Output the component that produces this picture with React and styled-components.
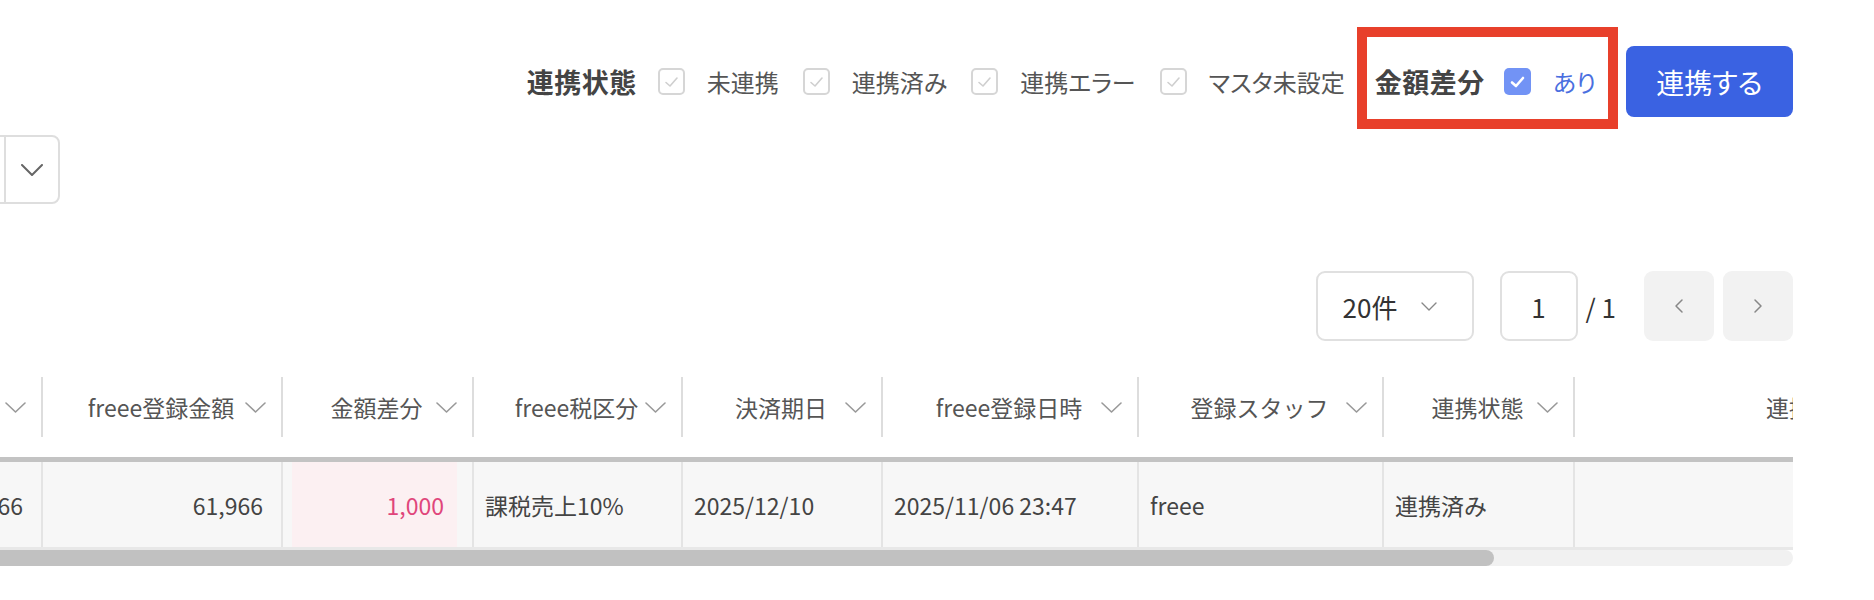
import React from "react";
import styled, { createGlobalStyle } from "styled-components";

const GlobalStyle = createGlobalStyle`
  html, body {
    margin: 0;
    background: #fff;
  }
  body {
    font-family: "Noto Sans CJK JP", "Noto Sans", sans-serif;
    color: #444;
    overflow: hidden;
  }
`;

const Page = styled.div`
  display: flex;
  flex-direction: column;
  padding: 46px 81px 0 0;
`;

/* ---------- toolbar ---------- */

const Toolbar = styled.div`
  display: flex;
  justify-content: flex-end;
  align-items: center;
  gap: 30px;
  height: 71px;
`;

const StatusGroup = styled.div`
  display: flex;
  align-items: center;
  gap: 24px;
`;

const GroupLabel = styled.span`
  font-size: 27px;
  font-weight: 700;
  letter-spacing: 0.5px;
  color: #444;
  margin-right: -3px;
`;

const Option = styled.label`
  display: flex;
  align-items: center;
  gap: 22px;
  font-size: 24px;
  color: ${(p) => (p.$active ? "#4a6fe0" : "#555")};
  font-feature-settings: "palt";
  white-space: nowrap;
`;

const Box = styled.span`
  width: 27px;
  height: 27px;
  box-sizing: border-box;
  border-radius: 5px;
  display: flex;
  align-items: center;
  justify-content: center;
  flex-shrink: 0;
  border: ${(p) => (p.$checked ? "none" : "2px solid #d6d6d6")};
  background: ${(p) => (p.$checked ? "#7293f5" : "#fff")};
`;

const DiffGroup = styled.div`
  position: relative;
  align-self: stretch;
  display: flex;
  align-items: center;
  gap: 22px;

  &::after {
    content: "";
    position: absolute;
    left: -18px;
    right: -22px;
    top: -19px;
    bottom: -12px;
    border: 10px solid #e8402b;
    pointer-events: none;
  }
`;

const SyncButton = styled.button`
  width: 167px;
  height: 71px;
  border: none;
  border-radius: 8px;
  background: #3a62e2;
  color: #fff;
  font-family: inherit;
  font-size: 28px;
  font-feature-settings: "palt";
`;

/* ---------- filter select (cut off at left) ---------- */

const FilterRow = styled.div`
  display: flex;
  margin-top: 18px;
`;

const CutSelect = styled.div`
  width: 200px;
  height: 69px;
  margin-left: -140px;
  box-sizing: border-box;
  border: 2px solid #dedede;
  border-radius: 8px;
  display: flex;
`;

const SelectValue = styled.div`
  flex: 1;
  border-right: 2px solid #dedede;
`;

const SelectToggle = styled.div`
  width: 52px;
  display: flex;
  align-items: center;
  justify-content: center;
`;

/* ---------- pagination ---------- */

const Pager = styled.div`
  display: flex;
  justify-content: flex-end;
  align-items: center;
  margin-top: 67px;
  font-size: 26px;
  color: #333;
`;

const PerPage = styled.div`
  width: 158px;
  height: 70px;
  box-sizing: border-box;
  border: 2px solid #e0e0e0;
  border-radius: 9px;
  display: flex;
  align-items: center;
  gap: 24px;
  padding-left: 25px;
  margin-right: 26px;
`;

const PageInput = styled.div`
  width: 78px;
  height: 70px;
  box-sizing: border-box;
  border: 2px solid #e0e0e0;
  border-radius: 9px;
  display: flex;
  align-items: center;
  justify-content: center;
`;

const PageTotal = styled.span`
  margin: 0 28px 0 8px;
`;

const PageButton = styled.button`
  width: 70px;
  height: 70px;
  border: none;
  border-radius: 9px;
  background: #f2f2f2;
  display: flex;
  align-items: center;
  justify-content: center;
  & + & {
    margin-left: 9px;
  }
`;

/* ---------- table ---------- */

const TableClip = styled.div`
  margin-top: 36px;
  overflow: hidden;
`;

const TableInner = styled.div`
  margin-left: -157px;
  width: max-content;
`;

const HeadRow = styled.div`
  display: flex;
  padding-bottom: 20px;
`;

const HeadCell = styled.div`
  flex-shrink: 0;
  width: ${(p) => p.$w}px;
  height: 60px;
  box-sizing: border-box;
  border-right: 2px solid #dddddd;
  display: flex;
  align-items: center;
  padding: 0 15px 0 34px;
`;

const HeadLabel = styled.span`
  flex: 1;
  text-align: center;
  white-space: nowrap;
  font-size: 23px;
  color: #555;
`;

const BodyRow = styled.div`
  display: flex;
  height: 85px;
  background: #f7f7f7;
  border-top: 5px solid #c3c3c3;
  border-bottom: 3px solid #e8e8e8;
`;

const Cell = styled.div`
  flex-shrink: 0;
  width: ${(p) => p.$w}px;
  box-sizing: border-box;
  border-right: 2px solid #e4e4e4;
  display: flex;
  align-items: center;
  justify-content: ${(p) => (p.$num ? "flex-end" : "flex-start")};
  padding: ${(p) => (p.$num ? "0 18px 0 0" : "0 0 0 11px")};
  font-size: 23px;
  color: #444;
  white-space: nowrap;
`;

const DiffCell = styled(Cell)`
  align-items: stretch;
  padding: 0 15px 0 9px;
`;

const DiffValue = styled.div`
  flex: 1;
  background: #fcf0f2;
  color: #e0457b;
  display: flex;
  align-items: center;
  justify-content: flex-end;
  padding-right: 13px;
`;

const ScrollTrack = styled.div`
  height: 16px;
  background: #f1f1f1;
  border-radius: 0 8px 8px 0;
`;

const ScrollThumb = styled.div`
  height: 100%;
  background: #c1c1c1;
  border-radius: 0 8px 8px 0;
`;

/* ---------- icons ---------- */

const Check = ({ light }) => (
  <svg width="17" height="14" viewBox="0 0 17 14">
    <polyline
      points="3,7.5 7,11 14,3"
      fill="none"
      stroke={light ? "#fff" : "#cfcfcf"}
      strokeWidth={light ? 2.6 : 1.6}
      strokeLinecap="round"
      strokeLinejoin="round"
    />
  </svg>
);

const ChevronDown = ({ w = 21, h = 11, color = "#999", sw = 1.6 }) => (
  <svg width={w} height={h} viewBox={`0 0 ${w} ${h}`}>
    <polyline
      points={`1,1 ${w / 2},${h - 1} ${w - 1},1`}
      fill="none"
      stroke={color}
      strokeWidth={sw}
      strokeLinecap="round"
      strokeLinejoin="round"
    />
  </svg>
);

const ChevronSide = ({ dir }) => (
  <svg width="10" height="16" viewBox="0 0 10 16">
    <polyline
      points={dir === "left" ? "8,2 2,8 8,14" : "2,2 8,8 2,14"}
      fill="none"
      stroke="#888"
      strokeWidth="1.5"
      strokeLinecap="round"
      strokeLinejoin="round"
    />
  </svg>
);

const statusOptions = ["未連携", "連携済み", "連携エラー", "マスタ未設定"];

const columns = [
  { key: "amount", label: "売上金額", w: 200, num: true },
  { key: "freeeAmount", label: "freee登録金額", w: 240, num: true },
  { key: "diff", label: "金額差分", w: 191, num: true },
  { key: "tax", label: "freee税区分", w: 209 },
  { key: "due", label: "決済期日", w: 200 },
  { key: "registered", label: "freee登録日時", w: 256 },
  { key: "staff", label: "登録スタッフ", w: 245 },
  { key: "status", label: "連携状態", w: 191 },
  { key: "syncedAt", label: "連携日時", w: 478 },
];

const row = {
  amount: "62,966",
  freeeAmount: "61,966",
  diff: "1,000",
  tax: "課税売上10%",
  due: "2025/12/10",
  registered: "2025/11/06 23:47",
  staff: "freee",
  status: "連携済み",
  syncedAt: "",
};

const App = () => {
  return (
    <Page>
      <GlobalStyle />
      <Toolbar>
        <StatusGroup>
          <GroupLabel>連携状態</GroupLabel>
          {statusOptions.map((o) => (
            <Option key={o}>
              <Box>
                <Check />
              </Box>
              {o}
            </Option>
          ))}
        </StatusGroup>
        <DiffGroup>
          <GroupLabel>金額差分</GroupLabel>
          <Option $active>
            <Box $checked>
              <Check light />
            </Box>
            あり
          </Option>
        </DiffGroup>
        <SyncButton>連携する</SyncButton>
      </Toolbar>

      <FilterRow>
        <CutSelect>
          <SelectValue />
          <SelectToggle>
            <ChevronDown w={22} h={12} color="#666" sw={2} />
          </SelectToggle>
        </CutSelect>
      </FilterRow>

      <Pager>
        <PerPage>
          20件
          <ChevronDown w={16} h={9} color="#888" sw={1.4} />
        </PerPage>
        <PageInput>1</PageInput>
        <PageTotal>/ 1</PageTotal>
        <PageButton>
          <ChevronSide dir="left" />
        </PageButton>
        <PageButton>
          <ChevronSide dir="right" />
        </PageButton>
      </Pager>

      <TableClip>
        <TableInner>
          <HeadRow>
            {columns.map((c) => (
              <HeadCell key={c.key} $w={c.w}>
                <HeadLabel>{c.label}</HeadLabel>
                <ChevronDown />
              </HeadCell>
            ))}
          </HeadRow>
          <BodyRow>
            {columns.map((c) =>
              c.key === "diff" ? (
                <DiffCell key={c.key} $w={c.w}>
                  <DiffValue>{row[c.key]}</DiffValue>
                </DiffCell>
              ) : (
                <Cell key={c.key} $w={c.w} $num={c.num}>
                  {row[c.key]}
                </Cell>
              )
            )}
          </BodyRow>
        </TableInner>
        <ScrollTrack>
          <ScrollThumb style={{ width: "83.3%" }} />
        </ScrollTrack>
      </TableClip>
    </Page>
  );
};

export default App;
